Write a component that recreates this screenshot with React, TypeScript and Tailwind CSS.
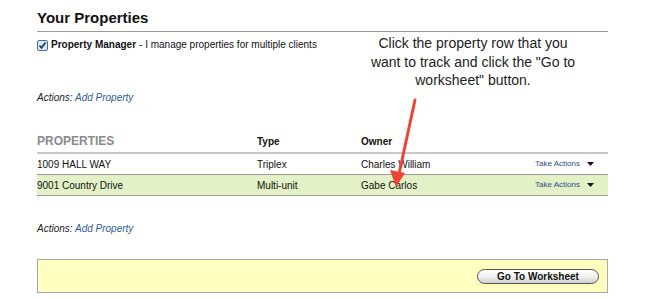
import React from "react";

const rows = [
  { name: "1009 HALL WAY", type: "Triplex", owner: "Charles William", selected: false },
  { name: "9001 Country Drive", type: "Multi-unit", owner: "Gabe Carlos", selected: true },
];

const Caret = () => (
  <svg width="7" height="4" viewBox="0 0 7 4" className="ml-[7px]">
    <path d="M0 0h7L3.5 4z" fill="#111" />
  </svg>
);

const ActionsLine = () => (
  <p className="text-[10px] leading-[14px] italic text-[#222]">
    Actions: <a className="text-[#2d5c9e]">Add Property</a>
  </p>
);

export default function App() {
  return (
    <div className="relative w-[645px] h-[299px] overflow-hidden bg-white text-[#111] font-['Liberation_Sans',Arial,sans-serif]">
      <div className="ml-[37px] w-[571px] pt-[8px]">
        <h1 className="text-[15px] leading-[20px] font-bold">Your Properties</h1>
        <div className="mt-[3px] border-t border-[#999]" />

        {/* Role */}
        <div className="mt-[6px] flex items-center text-[10px] leading-[14px]">
          <svg width="11" height="11" viewBox="0 0 11 11" className="mr-[3px]">
            <rect x="0.5" y="0.5" width="10" height="10" rx="1.5" fill="#dde8f6" stroke="#4a6d9c" />
            <path d="M2.5 5.5l2 2.3 4-5.3" fill="none" stroke="#1d3d6e" strokeWidth="1.8" />
          </svg>
          <span className="font-bold">Property Manager</span>
          <span className="ml-[3px]">- I manage properties for multiple clients</span>
        </div>

        <div className="mt-[39px]">
          <ActionsLine />
        </div>

        {/* Table */}
        <div className="mt-[28px]">
          <div className="flex items-end h-[21px] pb-[3px] border-b-2 border-[#c8c8c8]">
            <div className="w-[220px] text-[12px] leading-[15px] font-bold text-[#8a8a8a]">PROPERTIES</div>
            <div className="w-[104px] text-[10px] leading-[14px] font-bold">Type</div>
            <div className="text-[10px] leading-[14px] font-bold">Owner</div>
          </div>
          {rows.map((r) => (
            <div
              key={r.name}
              className={`flex items-center h-[21px] border-b border-[#9a9a9a] text-[10px] ${
                r.selected ? "bg-[#e3f1c6]" : "bg-white"
              }`}
            >
              <div className="w-[220px]">{r.name}</div>
              <div className="w-[104px]">{r.type}</div>
              <div className="flex-1">{r.owner}</div>
              <div className="flex items-center pr-[14px] text-[8px] text-[#2d4f86]">
                Take Actions
                <Caret />
              </div>
            </div>
          ))}
        </div>

        <div className="mt-[26px]">
          <ActionsLine />
        </div>

        {/* Footer */}
        <div className="mt-[23px] h-[34px] flex items-center justify-end pr-[8px] bg-[#fefec0] border border-[#a8a8a8]">
          <button className="w-[122px] h-[15px] rounded-full border border-[#555] bg-gradient-to-b from-white via-[#f2f2f2] to-[#cfcfcf] text-[10px] leading-[13px] font-bold text-[#111]">
            Go To Worksheet
          </button>
        </div>
      </div>

      {/* Annotation */}
      <div className="absolute left-[343px] top-[34px] w-[260px] text-center text-[14px] leading-[18.5px] text-[#222]">
        Click the property row that you
        <br />
        want to track and click the "Go to
        <br />
        worksheet" button.
      </div>
      <svg className="absolute left-0 top-0 pointer-events-none" width="645" height="299">
        <line x1="415" y1="100" x2="399" y2="174" stroke="#ee4438" strokeWidth="3" strokeLinecap="round" />
        <path d="M390 170l6 17 9-14z" fill="#ee4438" />
      </svg>
    </div>
  );
}
